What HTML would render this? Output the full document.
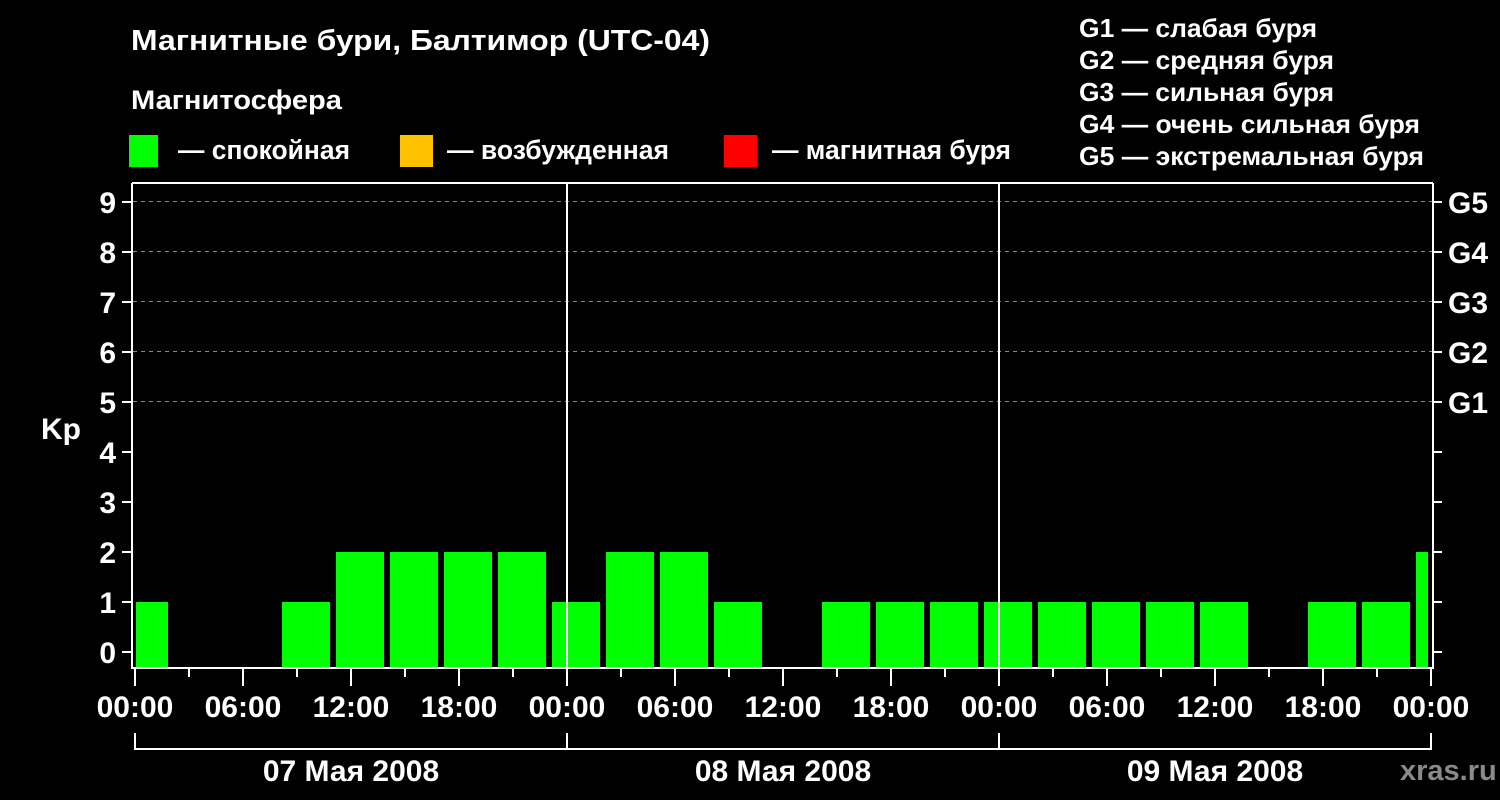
<!DOCTYPE html>
<html><head><meta charset="utf-8"><style>html,body{margin:0;padding:0;background:#000}svg{display:block}</style></head>
<body>
<svg width="1500" height="800" xmlns="http://www.w3.org/2000/svg" font-family="Liberation Sans, DejaVu Sans, sans-serif" font-weight="bold" fill="#fff">
<rect width="1500" height="800" fill="#000"/>
<text x="131" y="50" font-size="29" textLength="579" lengthAdjust="spacingAndGlyphs">Магнитные бури, Балтимор (UTC-04)</text>
<text x="131" y="109" font-size="27" textLength="211" lengthAdjust="spacingAndGlyphs">Магнитосфера</text>
<rect x="129" y="135" width="29" height="32" fill="#00ff00"/>
<text x="178" y="159" font-size="27" textLength="172" lengthAdjust="spacingAndGlyphs">— спокойная</text>
<rect x="400" y="135" width="33" height="32" fill="#ffc000"/>
<text x="447" y="159" font-size="27" textLength="222" lengthAdjust="spacingAndGlyphs">— возбужденная</text>
<rect x="724" y="135" width="33" height="32" fill="#ff0000"/>
<text x="772" y="159" font-size="27" textLength="239" lengthAdjust="spacingAndGlyphs">— магнитная буря</text>
<g font-size="26">
<text x="1079" y="37" textLength="238" lengthAdjust="spacingAndGlyphs">G1 — слабая буря</text>
<text x="1079" y="69" textLength="255" lengthAdjust="spacingAndGlyphs">G2 — средняя буря</text>
<text x="1079" y="101" textLength="255" lengthAdjust="spacingAndGlyphs">G3 — сильная буря</text>
<text x="1079" y="133" textLength="341" lengthAdjust="spacingAndGlyphs">G4 — очень сильная буря</text>
<text x="1079" y="165" textLength="345" lengthAdjust="spacingAndGlyphs">G5 — экстремальная буря</text>
</g>
<g stroke="#888" stroke-width="1" stroke-dasharray="4,4">
<line x1="133" y1="201.5" x2="1432" y2="201.5"/>
<line x1="133" y1="251.5" x2="1432" y2="251.5"/>
<line x1="133" y1="301.5" x2="1432" y2="301.5"/>
<line x1="133" y1="351.5" x2="1432" y2="351.5"/>
<line x1="133" y1="401.5" x2="1432" y2="401.5"/>
</g>
<g fill="#00ff00">
<rect x="136" y="602" width="32" height="66"/>
<rect x="282" y="602" width="48" height="66"/>
<rect x="336" y="552" width="48" height="116"/>
<rect x="390" y="552" width="48" height="116"/>
<rect x="444" y="552" width="48" height="116"/>
<rect x="498" y="552" width="48" height="116"/>
<rect x="552" y="602" width="48" height="66"/>
<rect x="606" y="552" width="48" height="116"/>
<rect x="660" y="552" width="48" height="116"/>
<rect x="714" y="602" width="48" height="66"/>
<rect x="822" y="602" width="48" height="66"/>
<rect x="876" y="602" width="48" height="66"/>
<rect x="930" y="602" width="48" height="66"/>
<rect x="984" y="602" width="48" height="66"/>
<rect x="1038" y="602" width="48" height="66"/>
<rect x="1092" y="602" width="48" height="66"/>
<rect x="1146" y="602" width="48" height="66"/>
<rect x="1200" y="602" width="48" height="66"/>
<rect x="1308" y="602" width="48" height="66"/>
<rect x="1362" y="602" width="48" height="66"/>
<rect x="1416" y="552" width="12" height="116"/>
</g>
<g stroke="#fff" stroke-width="2" fill="none">
<line x1="132" y1="183" x2="1433" y2="183"/>
<line x1="132" y1="183" x2="132" y2="669"/>
<line x1="1433" y1="183" x2="1433" y2="669"/>
<line x1="131" y1="668" x2="1434" y2="668"/>
<line x1="567" y1="183" x2="567" y2="668"/>
<line x1="999" y1="183" x2="999" y2="668"/>
</g>
<g stroke="#fff" stroke-width="2">
<line x1="122" y1="652" x2="132" y2="652"/><line x1="122" y1="602" x2="132" y2="602"/><line x1="122" y1="552" x2="132" y2="552"/><line x1="122" y1="502" x2="132" y2="502"/><line x1="122" y1="452" x2="132" y2="452"/><line x1="122" y1="402" x2="132" y2="402"/><line x1="122" y1="352" x2="132" y2="352"/><line x1="122" y1="302" x2="132" y2="302"/><line x1="122" y1="252" x2="132" y2="252"/><line x1="122" y1="202" x2="132" y2="202"/>
<line x1="1433" y1="652" x2="1442" y2="652"/><line x1="1433" y1="602" x2="1442" y2="602"/><line x1="1433" y1="552" x2="1442" y2="552"/><line x1="1433" y1="502" x2="1442" y2="502"/><line x1="1433" y1="452" x2="1442" y2="452"/><line x1="1433" y1="402" x2="1442" y2="402"/><line x1="1433" y1="352" x2="1442" y2="352"/><line x1="1433" y1="302" x2="1442" y2="302"/><line x1="1433" y1="252" x2="1442" y2="252"/><line x1="1433" y1="202" x2="1442" y2="202"/>
<line x1="135" y1="669" x2="135" y2="686"/><line x1="243" y1="669" x2="243" y2="686"/><line x1="351" y1="669" x2="351" y2="686"/><line x1="459" y1="669" x2="459" y2="686"/><line x1="567" y1="669" x2="567" y2="686"/><line x1="675" y1="669" x2="675" y2="686"/><line x1="783" y1="669" x2="783" y2="686"/><line x1="891" y1="669" x2="891" y2="686"/><line x1="999" y1="669" x2="999" y2="686"/><line x1="1107" y1="669" x2="1107" y2="686"/><line x1="1215" y1="669" x2="1215" y2="686"/><line x1="1323" y1="669" x2="1323" y2="686"/><line x1="1431" y1="669" x2="1431" y2="686"/>
<line x1="189" y1="669" x2="189" y2="677"/><line x1="297" y1="669" x2="297" y2="677"/><line x1="405" y1="669" x2="405" y2="677"/><line x1="513" y1="669" x2="513" y2="677"/><line x1="621" y1="669" x2="621" y2="677"/><line x1="729" y1="669" x2="729" y2="677"/><line x1="837" y1="669" x2="837" y2="677"/><line x1="945" y1="669" x2="945" y2="677"/><line x1="1053" y1="669" x2="1053" y2="677"/><line x1="1161" y1="669" x2="1161" y2="677"/><line x1="1269" y1="669" x2="1269" y2="677"/><line x1="1377" y1="669" x2="1377" y2="677"/>
<line x1="134" y1="749" x2="1432" y2="749"/>
<line x1="135" y1="733" x2="135" y2="750"/><line x1="567" y1="733" x2="567" y2="750"/><line x1="999" y1="733" x2="999" y2="750"/><line x1="1431" y1="733" x2="1431" y2="750"/>
</g>
<g font-size="30" text-anchor="end">
<text x="116" y="663">0</text><text x="116" y="613">1</text><text x="116" y="563">2</text><text x="116" y="513">3</text><text x="116" y="463">4</text><text x="116" y="413">5</text><text x="116" y="363">6</text><text x="116" y="313">7</text><text x="116" y="263">8</text><text x="116" y="213">9</text>
</g>
<text x="41" y="439" font-size="30">Kp</text>
<g font-size="30">
<text x="1448" y="213">G5</text><text x="1448" y="263">G4</text><text x="1448" y="313">G3</text><text x="1448" y="363">G2</text><text x="1448" y="413">G1</text>
</g>
<g font-size="30" text-anchor="middle">
<text x="135" y="717">00:00</text><text x="243" y="717">06:00</text><text x="351" y="717">12:00</text><text x="459" y="717">18:00</text><text x="567" y="717">00:00</text><text x="675" y="717">06:00</text><text x="783" y="717">12:00</text><text x="891" y="717">18:00</text><text x="999" y="717">00:00</text><text x="1107" y="717">06:00</text><text x="1215" y="717">12:00</text><text x="1323" y="717">18:00</text><text x="1431" y="717">00:00</text>
<text x="351" y="781">07 Мая 2008</text><text x="783" y="781">08 Мая 2008</text><text x="1215" y="781">09 Мая 2008</text>
</g>
<text x="1400" y="780" font-size="29" fill="#8a8a8a">xras.ru</text>
</svg>
</body></html>
